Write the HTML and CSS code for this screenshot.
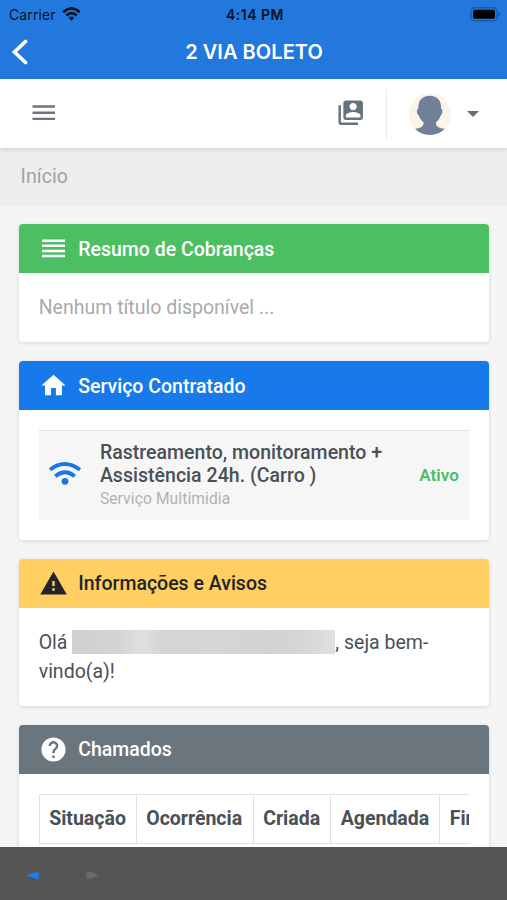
FILE: index.html
```html
<!DOCTYPE html>
<html lang="pt-BR">
<head>
<meta charset="utf-8">
<title>2 Via Boleto</title>
<link rel="stylesheet" href="styles.css">
</head>
<body>
<header class="app-header">
  <div class="status">
    <div class="carrier"><span>Carrier</span>
      <svg width="19" height="14" viewBox="0 0 18 14"><g fill="none" stroke="#061326" stroke-width="2.7"><path d="M.8 5.2Q9-2.400 17.200 5.2"/><path d="M3.800 8.600Q9 3.800 14.200 8.600"/></g><path d="M6.200 10.800Q9 8.400 11.800 10.800L9 13.800Z" fill="#061326"/></svg>
    </div>
    <span class="clock">4:14 PM</span>
    <svg class="battery" width="31" height="15" viewBox="0 0 31 15"><rect x="1" y=".7" width="26" height="13" rx="4" fill="none" stroke="#1c58a6" stroke-width="1.4"/><rect x="3" y="2.7" width="22" height="9" rx="2" fill="#000"/><path d="M28.5 5v4q1.8-.7 1.8-2t-1.8-2" fill="#1c58a6"/></svg>
  </div>
  <div class="title-row">
    <svg width="20" height="28" viewBox="0 0 20 28"><path d="M16.500 2.500 5.500 13l11 10.500" fill="none" stroke="#fff" stroke-width="3.700" stroke-linecap="round" stroke-linejoin="miter"/></svg>
    <h1>2 VIA BOLETO</h1>
  </div>
</header>
<nav class="navbar">
  <svg class="menu" width="23" height="16" viewBox="0 0 23 16"><path d="M.5 1.500h22.500M.5 7.700h22.500M.5 13.900h22.500" stroke="#6c757d" stroke-width="2.400"/></svg>
  <svg class="contacts" width="29.4" height="29.4" viewBox="0 0 24 24"><path fill="#65737c" d="M4 6H2v14c0 1.100.9 2 2 2h14v-2H4V6zm16-4H8c-1.100 0-2 .9-2 2v12c0 1.100.9 2 2 2h12c1.100 0 2-.9 2-2V4c0-1.100-.9-2-2-2zm-6 2c1.660 0 3 1.340 3 3s-1.340 3-3 3-3-1.340-3-3 1.340-3 3-3zm6 12H8v-1.500c0-1.990 4-3 6-3s6 1.010 6 3V16z"/></svg>
  <span class="divider"></span>
  <svg class="avatar" width="42" height="42" viewBox="0 0 42 42"><circle cx="21" cy="21" r="21" fill="#fcf3e9"/><path fill="#727f99" d="M20.700 2.700C13 2.700 9 7.500 9.200 16c-1.900.4-1.600 5.500.7 6.500.7 2.800 2.300 4.800 4.600 6.800.5 4-2.800 6.200-8.300 6.500C10 40 15.500 42 21 42s11-2 14.600-6.200c-5.800-.3-9.100-2.500-8.600-6.500 2.300-2 3.900-4 4.600-6.800 2.200-1 2.600-6.100.6-6.500C32.500 7.500 28.400 2.700 20.700 2.700Z"/></svg>
  <span class="caret"></span>
</nav>
<div class="breadcrumb">Início</div>
<main class="content">
  <section class="card">
    <h2 class="card-head green">
      <svg width="29" height="29" viewBox="0 0 29 29"><path d="M3 6.700h23M3 11.800h23M3 16.900h23M3 22h23" stroke="#fff" stroke-width="2.500"/></svg>
      <span>Resumo de Cobranças</span>
    </h2>
    <div class="card-body empty">Nenhum título disponível ...</div>
  </section>
  <section class="card">
    <h2 class="card-head blue">
      <svg width="29" height="29" viewBox="0 0 24 24"><path fill="#fff" d="M10 20v-6h4v6h5v-8h3L12 3 2 12h3v8z"/></svg>
      <span>Serviço Contratado</span>
    </h2>
    <div class="card-body">
      <div class="service">
        <svg width="34" height="26" viewBox="0 0 34 26"><g fill="none" stroke="#1a76e3" stroke-width="3.800"><path d="M2 7.700Q16.500-3.700 32 7.700"/><path d="M7.300 14.200Q17 6.200 26.700 14.200"/></g><circle cx="17" cy="19.300" r="3.400" fill="#1a76e3"/></svg>
        <div class="service-text"><strong>Rastreamento, monitoramento +<br>Assistência 24h. (Carro )</strong><small>Serviço Multimidia</small></div>
        <b class="state">Ativo</b>
      </div>
    </div>
  </section>
  <section class="card">
    <h2 class="card-head yellow">
      <svg width="29" height="29" viewBox="0 0 24 24"><path fill="#212529" d="M1 21h22L12 2 1 21zm12-3h-2v-2h2v2zm0-4h-2v-4h2v4z"/></svg>
      <span>Informações e Avisos</span>
    </h2>
    <div class="card-body notice">Olá <span class="redacted"></span>, seja bem-<br>vindo(a)!</div>
  </section>
  <section class="card">
    <h2 class="card-head gray">
      <svg width="29" height="29" viewBox="0 0 24 24"><path fill="#fff" d="M12 2C6.480 2 2 6.480 2 12s4.480 10 10 10 10-4.480 10-10S17.520 2 12 2zm1 17h-2v-2h2v2zm2.070-7.750l-.9.920C13.450 12.900 13 13.500 13 15h-2v-.5c0-1.100.45-2.100 1.170-2.830l1.240-1.260c.37-.36.590-.86.590-1.410 0-1.100-.9-2-2-2s-2 .9-2 2H8c0-2.210 1.790-4 4-4s4 1.790 4 4c0 .880-.36 1.680-.93 2.250z"/></svg>
      <span>Chamados</span>
    </h2>
    <div class="card-body">
      <div class="table-scroll">
        <table><thead><tr><th class="c1">Situação</th><th class="c2">Ocorrência</th><th class="c3">Criada</th><th class="c4">Agendada</th><th class="c5">Finalizada</th></tr></thead></table>
      </div>
    </div>
  </section>
</main>
<footer class="toolbar">
  <svg width="13" height="9" viewBox="0 0 13 9"><path d="M0 4.500 12.500 .5v8z" fill="#157efb"/></svg>
  <svg width="13" height="9" viewBox="0 0 13 9"><path d="M.5 1.200 6 1l6.500 3.500L6 7.500H.5z" fill="#6b6b6b"/></svg>
</footer>
</body>
</html>
```

FILE: styles.css
```css
* { box-sizing: border-box; }
body {
  margin: 0;
  height: 900px;
  display: flex;
  flex-direction: column;
  overflow: hidden;
  background: #f5f5f5;
  color: #495057;
  font: 19.5px/29.3px Roboto, sans-serif;
}
svg { display: block; flex: none; }
.app-header { flex: none; height: 79px; background: #2278dc; font-family: Inter, sans-serif; }
.status {
  height: 27px;
  padding: 0 6px 0 9px;
  display: grid;
  grid-template-columns: 1fr auto 1fr;
  align-items: center;
  color: #061326;
  font-size: 14px;
  line-height: 27px;
}
.carrier { display: flex; align-items: center; gap: 6px; letter-spacing: .1px; }
.carrier svg { margin-top: -1px; }
.clock { font-size: 14px; font-weight: 600; letter-spacing: .5px; color: #07101c; }
.battery { justify-self: end; }
.title-row { height: 51px; display: flex; align-items: center; padding-left: 9px; }
.title-row h1 {
  flex: 1;
  margin: 1px 28px 0 0;
  text-align: center;
  color: #fff;
  font-size: 20px;
  font-weight: 600;
  letter-spacing: .05px;
}
.carrier span, .clock { padding-top: 1px; }
.navbar {
  flex: none;
  height: 69px;
  display: flex;
  align-items: center;
  padding: 0 28px 0 32px;
  background: #fff;
  position: relative;
  box-shadow: 0 1px 5px rgba(0, 0, 0, .16);
}
.menu { margin-bottom: 1px; }
.contacts { margin: 0 0 2px auto; }
.divider { width: 1px; height: 50px; margin: 0 22px 0 21px; background: #e8eaeb; }
.caret {
  margin-left: 16px;
  border: 6px solid transparent;
  border-top-color: #6d6d6d;
  border-bottom: 0;
}
.breadcrumb { flex: none; height: 58px; padding: 14px 20.500px; background: #eee; color: #a0a2a4; letter-spacing: .1px; }
.content {
  flex: 1;
  min-height: 0;
  overflow: hidden;
  padding: 18.400px 18.500px 0 19.200px;
  display: flex;
  flex-direction: column;
  gap: 19.500px;
}
.card { flex: none; background: #fff; border-radius: 4px; box-shadow: 0 1px 4px rgba(0, 0, 0, .13); }
.card-head {
  margin: 0;
  height: 48.800px;
  padding: 0 20px;
  display: flex;
  align-items: center;
  gap: 10px;
  border-radius: 4px 4px 0 0;
  color: #fff;
  font-size: 19.500px;
  font-weight: 500;
}
.green span, .blue span { padding-top: 2px; }
.green { background: #4cbf62; }
.blue { background: #187aea; }
.yellow { background: #ffcf62; color: #212529; }
.yellow span { padding-top: 1px; }
.gray { background: #6b757d; }
.card-body { padding: 19.700px 19.500px; }
.empty { color: #a8aaac; }
.service {
  height: 90px;
  display: flex;
  align-items: center;
  padding: 0 10px 0 9px;
  border-top: 1px solid #dee2e6;
  background: #f6f6f6;
}
.service-text { margin-left: 18.200px; padding-top: 1.500px; line-height: 23.300px; }
.service-text strong { display: block; font-weight: 500; letter-spacing: .03px; white-space: nowrap; }
.service-text small { display: block; color: #b1b3b5; font-size: 15.600px; letter-spacing: .1px; }
.state { margin-left: auto; padding-top: 1px; color: #4cbf62; font-size: 17px; font-weight: 600; letter-spacing: .1px; }
.notice { height: 98px; }
.redacted {
  display: inline-block;
  width: 263px;
  height: 24px;
  margin-top: -1px;
  vertical-align: -5px;
  background: linear-gradient(90deg, #cdcfd0 0, #d2d4d5 18%, #dfe0e2 26%, #d3d5d6 35%, #d4d6d7 55%, #d0d2d3 75%, #d5d7d8 90%, #dfe0e1 100%);
}
.table-scroll { overflow: hidden; }
table { width: 620px; table-layout: fixed; border-collapse: collapse; }
th { height: 49px; padding: 0 9.500px; border: 1px solid #dee2e6; text-align: left; font-weight: 700; white-space: nowrap; }
.c1 { width: 97px; }
.c2 { width: 117px; }
.c3 { width: 77.500px; }
.c4 { width: 109px; }
.toolbar {
  flex: none;
  height: 53.500px;
  padding: 4px 26px 0;
  display: flex;
  align-items: center;
  gap: 47px;
  background: #555;
  position: relative;
}
```
